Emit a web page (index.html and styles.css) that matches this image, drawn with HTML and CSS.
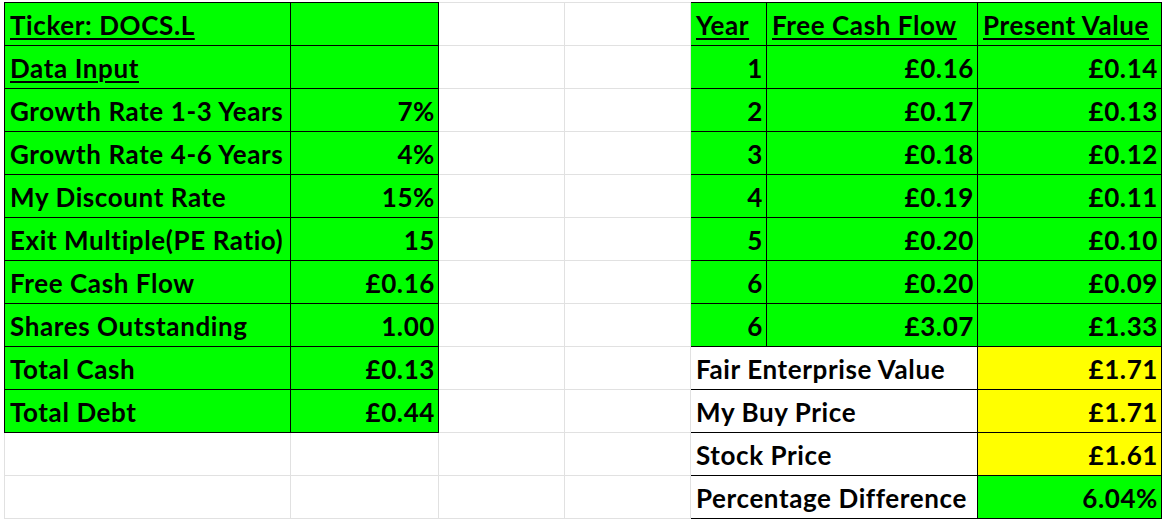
FILE: index.html
```html
<!DOCTYPE html>
<html lang="en">
<head>
<meta charset="utf-8">
<title>DOCS.L valuation</title>
<link rel="stylesheet" href="styles.css">
</head>
<body>
<div class="sheet">
<table class="grid">
<colgroup>
<col class="c-a"><col class="c-b"><col class="c-c"><col class="c-d"><col class="c-e"><col class="c-f"><col class="c-g">
</colgroup>
<tbody>
<tr>
<td class="g u">Ticker: DOCS.L</td><td class="g"></td><td></td><td></td>
<td class="g u">Year</td><td class="g u">Free Cash Flow</td><td class="g u">Present Value</td>
</tr>
<tr>
<td class="g u">Data Input</td><td class="g"></td><td></td><td></td>
<td class="g r">1</td><td class="g r">£0.16</td><td class="g r">£0.14</td>
</tr>
<tr>
<td class="g">Growth Rate 1-3 Years</td><td class="g r">7%</td><td></td><td></td>
<td class="g r">2</td><td class="g r">£0.17</td><td class="g r">£0.13</td>
</tr>
<tr>
<td class="g">Growth Rate 4-6 Years</td><td class="g r">4%</td><td></td><td></td>
<td class="g r">3</td><td class="g r">£0.18</td><td class="g r">£0.12</td>
</tr>
<tr>
<td class="g">My Discount Rate</td><td class="g r">15%</td><td></td><td></td>
<td class="g r">4</td><td class="g r">£0.19</td><td class="g r">£0.11</td>
</tr>
<tr>
<td class="g">Exit Multiple(PE Ratio)</td><td class="g r">15</td><td></td><td></td>
<td class="g r">5</td><td class="g r">£0.20</td><td class="g r">£0.10</td>
</tr>
<tr>
<td class="g">Free Cash Flow</td><td class="g r">£0.16</td><td></td><td></td>
<td class="g r">6</td><td class="g r">£0.20</td><td class="g r">£0.09</td>
</tr>
<tr>
<td class="g">Shares Outstanding</td><td class="g r">1.00</td><td></td><td></td>
<td class="g r">6</td><td class="g r">£3.07</td><td class="g r">£1.33</td>
</tr>
<tr>
<td class="g">Total Cash</td><td class="g r">£0.13</td><td></td><td></td>
<td class="w" colspan="2">Fair Enterprise Value</td><td class="y r">£1.71</td>
</tr>
<tr>
<td class="g">Total Debt</td><td class="g r">£0.44</td><td></td><td></td>
<td class="w" colspan="2">My Buy Price</td><td class="y r">£1.71</td>
</tr>
<tr>
<td></td><td></td><td></td><td></td>
<td class="w" colspan="2">Stock Price</td><td class="y r">£1.61</td>
</tr>
<tr>
<td></td><td></td><td></td><td></td>
<td class="w" colspan="2">Percentage Difference</td><td class="g r">6.04%</td>
</tr>
</tbody>
</table>
</div>
</body>
</html>
```

FILE: styles.css
```css
html, body {
  margin: 0;
  padding: 0;
  background: #ffffff;
}
.sheet {
  padding: 2px 0 0 4px;
}
.grid {
  border-collapse: collapse;
  table-layout: fixed;
  width: 1157px;
  font-family: Lato, "Open Sans", "Liberation Sans", sans-serif;
  font-weight: 700;
  font-size: 26px;
  letter-spacing: 0.6px;
  color: #000;
}
.c-a { width: 286px; }
.c-b { width: 148px; }
.c-c { width: 126px; }
.c-d { width: 126px; }
.c-e { width: 76px; }
.c-f { width: 211px; }
.c-g { width: 184px; }
.grid td {
  height: 43px;
  padding: 0 3px 6px 5px;
  border: 1px solid #e1e1e1;
  vertical-align: bottom;
  line-height: 28px;
  white-space: nowrap;
  overflow: hidden;
  box-sizing: border-box;
}
.grid td.g {
  background: #00ff00;
  border-color: #000;
}
.grid td.y {
  background: #ffff00;
  border-color: #000;
}
.grid td.w {
  background: #ffffff;
  border-color: #000;
}
.grid td.r {
  text-align: right;
}
.grid td.u {
  text-decoration: underline;
  text-decoration-thickness: 2px;
  text-underline-offset: 3px;
}
```
